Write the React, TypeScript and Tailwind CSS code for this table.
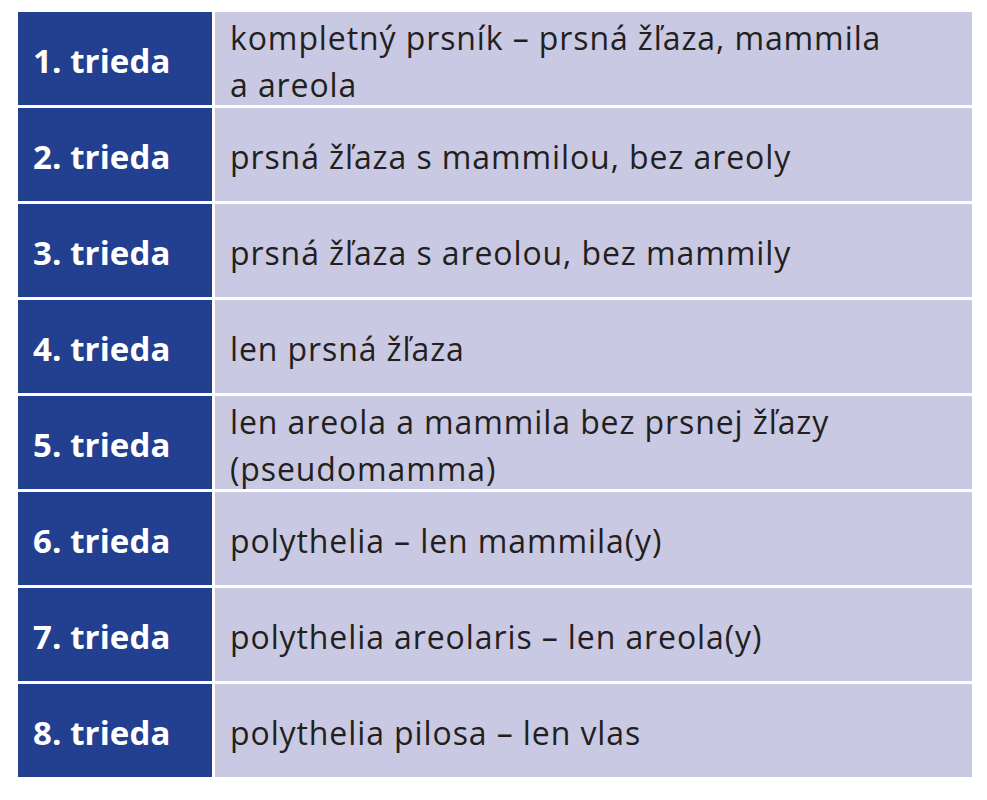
const rows: { label: string; lines: string[] }[] = [
  { label: "1. trieda", lines: ["kompletný prsník – prsná žľaza, mammila", "a areola"] },
  { label: "2. trieda", lines: ["prsná žľaza s mammilou, bez areoly"] },
  { label: "3. trieda", lines: ["prsná žľaza s areolou, bez mammily"] },
  { label: "4. trieda", lines: ["len prsná žľaza"] },
  { label: "5. trieda", lines: ["len areola a mammila bez prsnej žľazy", "(pseudomamma)"] },
  { label: "6. trieda", lines: ["polythelia – len mammila(y)"] },
  { label: "7. trieda", lines: ["polythelia areolaris – len areola(y)"] },
  { label: "8. trieda", lines: ["polythelia pilosa – len vlas"] },
];

export default function App() {
  return (
    <div className="min-h-screen w-full bg-white pt-[12px] pl-[18px] font-['Open_Sans',sans-serif]">
      <div className="flex w-[954px] flex-col gap-[3px]">
        {rows.map((row) => (
          <div key={row.label} className="grid h-[93px] shrink-0 grid-cols-[194px_1fr] gap-[3px] overflow-hidden">
            <div className="flex items-center bg-[#233f8f] pt-[4px] pl-[15px] text-[33px] font-bold tracking-[0.1px] text-white">
              {row.label}
            </div>
            {/* two-line cells sit a bit lower than a centred block would */}
            <div
              className={
                row.lines.length > 1
                  ? "flex flex-col justify-start overflow-hidden bg-[#c9c9e3] pt-[2px] pl-[15px] text-[32px] leading-[47px] tracking-[0.9px] text-[#231f20]"
                  : "flex flex-col justify-center overflow-hidden bg-[#c9c9e3] pt-[3px] pl-[15px] text-[32px] leading-[45px] tracking-[0.9px] text-[#231f20]"
              }
            >
              {row.lines.map((line) => (
                <div key={line}>{line}</div>
              ))}
            </div>
          </div>
        ))}
      </div>
    </div>
  );
}
